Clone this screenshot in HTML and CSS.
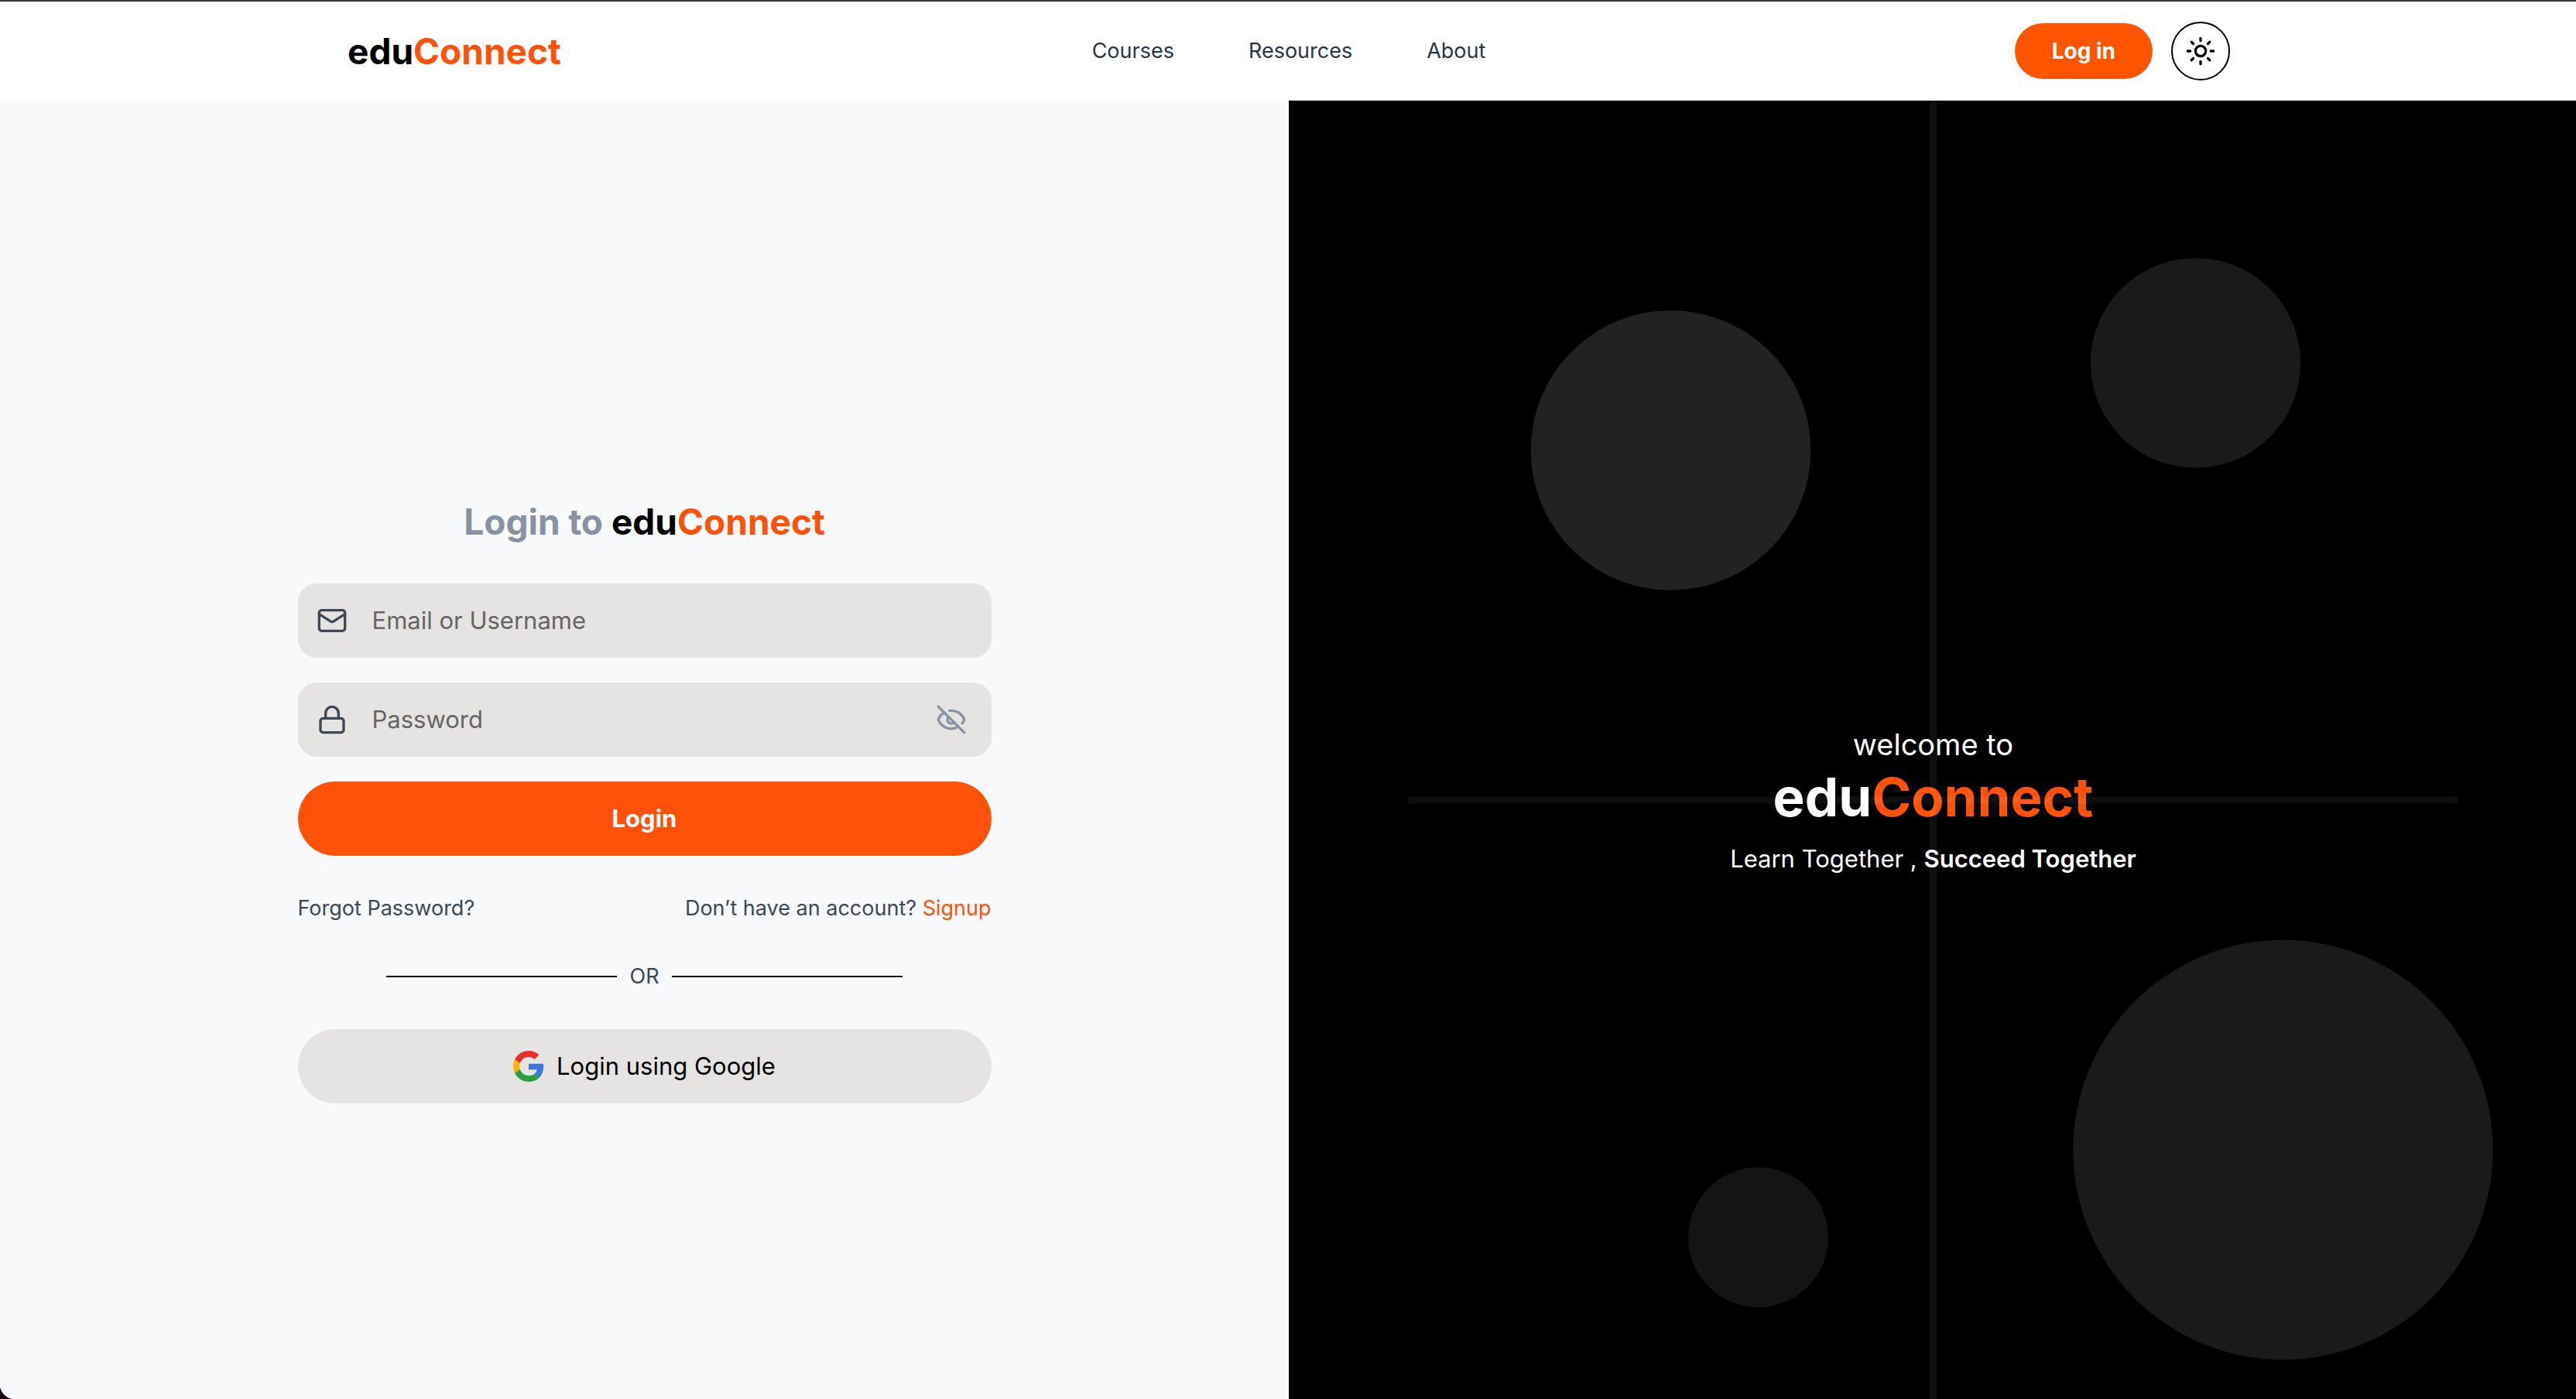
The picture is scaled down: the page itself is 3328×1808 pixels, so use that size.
FILE: index.html
```html
<!DOCTYPE html>
<html lang="en">
<head>
<meta charset="utf-8">
<meta name="viewport" content="width=device-width, initial-scale=1">
<title>eduConnect</title>
<link rel="stylesheet" href="styles.css">
</head>
<body>
<div class="page">
  <header class="site-header">
    <div class="header-inner">
      <a class="brand" href="#">edu<span class="accent">Connect</span></a>
      <nav class="nav" aria-label="Main">
        <a href="#">Courses</a>
        <a href="#">Resources</a>
        <a href="#">About</a>
      </nav>
      <div class="header-actions">
        <button class="btn-small" type="button">Log in</button>
        <button class="theme-toggle" type="button" aria-label="Toggle theme">
          <svg class="icon" viewBox="0 0 24 24" aria-hidden="true"><circle cx="12" cy="12" r="4"/><path d="M12 2v2M12 20v2M4.93 4.93l1.41 1.41M17.66 17.66l1.41 1.41M2 12h2M20 12h2M6.34 17.66l-1.41 1.41M19.07 4.93l-1.41 1.41"/></svg>
        </button>
      </div>
    </div>
  </header>

  <main class="split">
    <section class="login-panel">
      <form class="login-form">
        <h1 class="title">Login to <span class="name">edu</span><span class="accent">Connect</span></h1>
        <div class="fields">
          <label class="field">
            <svg class="icon" viewBox="0 0 24 24" aria-hidden="true"><rect x="2" y="4" width="20" height="16" rx="2"/><path d="m22 7-8.97 5.7a1.94 1.94 0 0 1-2.06 0L2 7"/></svg>
            <input type="text" placeholder="Email or Username" aria-label="Email or Username">
          </label>
          <div class="field">
            <svg class="icon" viewBox="0 0 24 24" aria-hidden="true"><rect x="3" y="11" width="18" height="11" rx="2"/><path d="M7 11V7a5 5 0 0 1 10 0v4"/></svg>
            <input type="password" placeholder="Password" aria-label="Password">
            <button class="reveal" type="button" aria-label="Show password">
              <svg class="icon" viewBox="0 0 24 24" aria-hidden="true"><path d="M10.733 5.076a10.744 10.744 0 0 1 11.205 6.575 1 1 0 0 1 0 .696 10.747 10.747 0 0 1-1.444 2.49"/><path d="M14.084 14.158a3 3 0 0 1-4.242-4.242"/><path d="M17.479 17.499a10.75 10.75 0 0 1-15.417-5.151 1 1 0 0 1 0-.696 10.75 10.75 0 0 1 4.446-5.143"/><path d="m2 2 20 20"/></svg>
            </button>
          </div>
          <button class="btn btn-primary" type="submit">Login</button>
        </div>
        <div class="links">
          <a href="#">Forgot Password?</a>
          <span>Don’t have an account? <a class="accent" href="#">Signup</a></span>
        </div>
        <div class="divider"><span class="line"></span><span>OR</span><span class="line"></span></div>
        <button class="btn btn-google" type="button">
          <svg class="google" viewBox="0 0 48 48" aria-hidden="true">
            <path fill="#e62f2d" d="M24 9.5c3.54 0 6.71 1.22 9.21 3.6l6.85-6.85C35.9 2.38 30.47 0 24 0 14.62 0 6.51 5.38 2.56 13.22l7.98 6.19C12.43 13.72 17.74 9.5 24 9.5z"/>
            <path fill="#3c79de" d="M46.98 24.55c0-1.57-.15-3.09-.38-4.55H24v9.02h12.94c-.58 2.96-2.26 5.48-4.78 7.18l7.73 6c4.51-4.18 7.09-10.36 7.09-17.65z"/>
            <path fill="#fab30c" d="M10.53 28.59A14.5 14.5 0 0 1 9.77 24c0-1.6.27-3.14.76-4.59l-7.98-6.19A23.9 23.9 0 0 0 0 24c0 3.88.92 7.54 2.56 10.78l7.97-6.19z"/>
            <path fill="#2d9f42" d="M24 48c6.48 0 11.93-2.13 15.89-5.81l-7.73-6c-2.15 1.45-4.92 2.3-8.16 2.3-6.26 0-11.57-4.22-13.47-9.91l-7.98 6.19C6.51 42.62 14.62 48 24 48z"/>
          </svg>
          Login using Google
        </button>
      </form>
    </section>

    <section class="welcome-panel">
      <div class="welcome">
        <p class="welcome-lead">welcome to</p>
        <h2 class="welcome-name">edu<span class="accent">Connect</span></h2>
        <p class="welcome-tag">Learn Together , <strong>Succeed Together</strong></p>
      </div>
      <svg class="shapes" viewBox="0 0 800 800" preserveAspectRatio="xMidYMid slice" fill="#fff" aria-hidden="true">
        <circle cx="250" cy="200" r="80" fill-opacity=".133"/>
        <circle cx="550" cy="150" r="60" fill-opacity=".1"/>
        <circle cx="600" cy="600" r="120" fill-opacity=".1"/>
        <circle cx="300" cy="650" r="40" fill-opacity=".08"/>
        <path d="M400 0V800M100 400H700" stroke="#fff" stroke-opacity=".06" stroke-width="4"/>
      </svg>
    </section>
  </main>
</div>
<div class="window-corner"></div>
</body>
</html>
```
FILE: styles.css
```css
:root {
  --orange: #fe520a;
  --field: #e5e4e2;
  --text: #3d4756;
  --muted: #8892a2;
}

* {
  box-sizing: border-box;
  margin: 0;
}

body {
  overflow: hidden;
  font-family: Inter, "Liberation Sans", sans-serif;
  font-size: 27px;
  line-height: 40px;
  color: var(--text);
  background: #f8f9fb;
}

.page {
  height: 100vh;
  margin-right: -2px;
  overflow: hidden;
}

a {
  color: inherit;
  text-decoration: none;
}

button,
input {
  font: inherit;
  color: inherit;
  border: 0;
  padding: 0;
  background: none;
}

.accent {
  color: var(--orange);
}

.icon {
  display: block;
  flex: none;
  width: 40px;
  height: 40px;
  fill: none;
  stroke: currentColor;
  stroke-width: 2;
  stroke-linecap: round;
  stroke-linejoin: round;
}

/* Header */
.site-header {
  border-top: 2px solid #33373b;
  background: #fff;
}

.header-inner {
  display: grid;
  grid-template-columns: 1fr auto 1fr;
  align-items: center;
  max-width: 2432px;
  margin: 0 auto;
  padding: 26px 0;
}

.brand {
  font-size: 46px;
  line-height: 64px;
  font-weight: 700;
  color: #000;
}

.nav {
  display: flex;
  gap: 96px;
  color: #29344a;
}

.header-actions {
  display: flex;
  align-items: center;
  justify-content: flex-end;
  gap: 24px;
}

.btn-small {
  padding: 16px 48px;
  border-radius: 36px;
  background: #ff5500;
  color: #fff;
  font-size: 28px;
  font-weight: 700;
}

.theme-toggle {
  padding: 16px;
  border: 2px solid #000;
  border-radius: 50%;
  color: #000;
}

/* Two halves */
.split {
  display: grid;
  grid-template-columns: 1fr 1fr;
  min-height: 100vh;
}

.login-panel {
  display: flex;
  align-items: center;
  justify-content: center;
}

.login-form {
  display: flex;
  flex-direction: column;
  gap: 48px;
  width: 100%;
  max-width: 896px;
}

.title {
  font-size: 46px;
  line-height: 64px;
  font-weight: 700;
  text-align: center;
  color: var(--muted);
}

.name {
  color: #000;
}

.fields {
  display: flex;
  flex-direction: column;
  gap: 32px;
}

.field {
  display: flex;
  align-items: center;
  height: 96px;
  padding: 0 32px 0 24px;
  border-radius: 24px;
  background: var(--field);
}

.field input {
  flex: 1;
  min-width: 0;
  padding: 0 32px;
  font-size: 31px;
  line-height: 48px;
  outline: 0;
}

.field input::placeholder {
  color: #666564;
  opacity: 1;
}

.reveal {
  color: var(--muted);
}

.btn {
  display: flex;
  align-items: center;
  justify-content: center;
  gap: 16px;
  height: 96px;
  border-radius: 48px;
  font-size: 31px;
  line-height: 48px;
}

.btn-primary {
  background: var(--orange);
  color: #fff;
  font-weight: 700;
}

.btn-google {
  background: var(--field);
  color: #000;
}

.google {
  width: 40px;
  height: 40px;
}

.links {
  display: flex;
  justify-content: space-between;
}

.divider {
  display: flex;
  align-items: center;
  justify-content: center;
  gap: 16px;
}

.line {
  width: 33.333%;
  height: 2px;
  background: #000;
}

/* Welcome side */
.welcome-panel {
  position: relative;
  display: flex;
  align-items: center;
  justify-content: center;
  background: #000;
  color: #fff;
}

.shapes {
  position: absolute;
  inset: 0;
  width: 100%;
  height: 100%;
}

.welcome {
  text-align: center;
}

.welcome-lead {
  font-size: 38px;
  line-height: 56px;
}

.welcome-name {
  font-size: 69px;
  line-height: 80px;
  font-weight: 700;
}

.welcome-tag {
  margin-top: 16px;
  font-size: 31px;
  line-height: 48px;
}

.welcome-tag strong {
  font-weight: 600;
}

/* Rounded lower corner of the window */
.window-corner {
  position: fixed;
  left: 0;
  bottom: 0;
  width: 20px;
  height: 20px;
  background: radial-gradient(circle at 100% 0, transparent 20px, #1c0310 21px);
}
```
